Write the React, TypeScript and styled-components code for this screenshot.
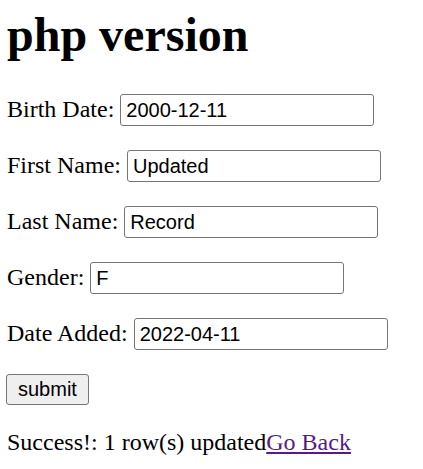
import React from "react";
import styled, { createGlobalStyle } from "styled-components";

const GlobalStyle = createGlobalStyle`
  html, body {
    margin: 0;
    padding: 0;
    background: #ffffff;
  }
  body {
    font-family: "Liberation Serif", "Times New Roman", serif;
    color: #000000;
  }
`;

const Page = styled.div`
  padding: 0 7px;
  display: flow-root;
`;

const Title = styled.h1`
  font-family: "Liberation Serif", "Times New Roman", serif;
  font-size: 48px;
  font-weight: bold;
  margin: 7px 0 32px;
  line-height: normal;
`;

const Form = styled.form`
  margin: 0;
`;

const Row = styled.p`
  font-size: 24px;
  margin: 24px 0;
  &:first-child {
    margin-top: 0;
  }
`;

const Field = styled.input`
  font-family: "Liberation Sans", Arial, sans-serif;
  font-size: 20px;
  width: 254px;
  height: 32px;
  box-sizing: border-box;
  padding: 1px 5px;
  border: 1px solid #767676;
  border-radius: 3px;
  color: #000;
  background: #fff;
  vertical-align: baseline;
  outline: none;
`;

const SubmitButton = styled.button`
  font-family: "Liberation Sans", Arial, sans-serif;
  font-size: 20px;
  height: 31px;
  padding: 0 11px;
  border: 1px solid #767676;
  border-radius: 3px;
  background: #efefef;
  color: #000;
  margin: 0 0 0 -1px;
  display: block;
`;

const Status = styled.p`
  font-size: 24px;
  margin: 24px 0;
`;

const BackLink = styled.a`
  color: #551a8b;
  text-decoration: underline;
`;

const fields: { label: string; name: string; value: string }[] = [
  { label: "Birth Date:", name: "birth_date", value: "2000-12-11" },
  { label: "First Name:", name: "first_name", value: "Updated" },
  { label: "Last Name:", name: "last_name", value: "Record" },
  { label: "Gender:", name: "gender", value: "F" },
  { label: "Date Added:", name: "date_added", value: "2022-04-11" },
];

export default function App() {
  return (
    <>
      <GlobalStyle />
      <Page>
        <Title>php version</Title>
        <Form onSubmit={(e) => e.preventDefault()}>
          {fields.map((f) => (
            <Row key={f.name}>
              {f.label} <Field type="text" name={f.name} defaultValue={f.value} />
            </Row>
          ))}
          <SubmitButton type="submit">submit</SubmitButton>
        </Form>
        <Status>
          Success!: 1 row(s) updated<BackLink href="#">Go Back</BackLink>
        </Status>
      </Page>
    </>
  );
}
